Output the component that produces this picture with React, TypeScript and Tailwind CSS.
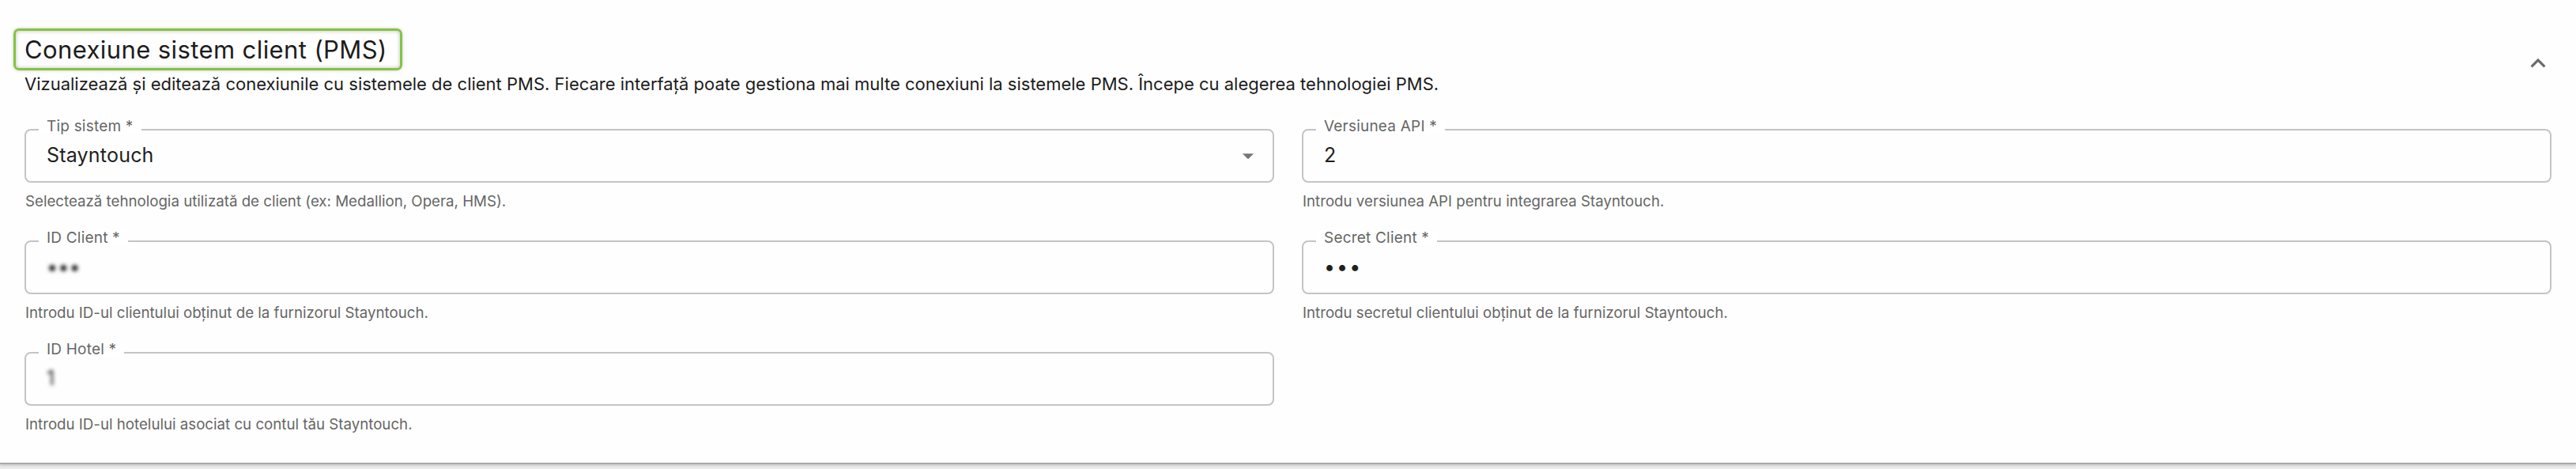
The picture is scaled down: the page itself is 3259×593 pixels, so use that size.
import React from 'react';

type FieldProps = {
  label: string;
  helper: string;
  children?: React.ReactNode;
  select?: boolean;
};

const Field: React.FC<FieldProps> = ({ label, helper, children, select }) => (
  <div className="flex flex-col">
    <div className="relative h-[68px] rounded-[8px] border-2 border-[#c4c4c4] flex items-center pl-[26px] pr-[14px]">
      {/* etichetă peste conturul câmpului */}
      <span className="absolute left-[16px] top-[-15px] bg-white px-[10px] text-[19px] leading-[19px] tracking-[0.2px] text-[#666666]">
        {label} *
      </span>
      <div className="flex-1 text-[25px] tracking-[0.2px] text-[#1f1f1f]">{children}</div>
      {select && (
        <svg viewBox="0 0 24 24" className="h-[34px] w-[34px] fill-[#757575]">
          <path d="M7 10l5 5 5-5z" />
        </svg>
      )}
    </div>
    <p className="mt-[9px] pl-[1px] text-[18.7px] leading-[30px] text-[#666666]">{helper}</p>
  </div>
);

const App: React.FC = () => {
  return (
    <div className="min-h-[593px] bg-[#ececec] font-['Inter','Noto_Sans',sans-serif]">
      <div className="h-[587px] bg-[#fefefe] border-b-2 border-[#a9a9a9] shadow-[0_2px_3px_rgba(0,0,0,0.15)] px-[31px] pt-[36px]">
        {/* Antet secțiune */}
        <div className="flex items-start justify-between">
          <div>
            <h2 className="inline-block -ml-[14px] rounded-[7px] border-[3px] border-[#84c441] pl-[11px] pr-[16px] text-[31px] leading-[47px] tracking-[0.4px] text-[#1c1c1c] shadow-[inset_0_0_5px_rgba(0,0,0,0.25),0_0_4px_rgba(0,0,0,0.2)]">
              Conexiune sistem client (PMS)
            </h2>
            <p className="mt-[2px] text-[22px] leading-[30px] text-[#1c1c1c]">
              Vizualizează și editează conexiunile cu sistemele de client PMS. Fiecare interfață poate gestiona mai multe conexiuni la sistemele PMS. Începe cu alegerea tehnologiei PMS.
            </p>
          </div>
          <svg viewBox="0 0 24 24" className="mt-[25px] -mr-[2px] h-[38px] w-[38px] fill-[#6b6b6b]">
            <path d="M12 8l-6 6 1.41 1.41L12 10.83l4.59 4.58L18 14z" />
          </svg>
        </div>

        {/* Câmpuri */}
        <div className="mt-[42px] grid grid-cols-2 gap-x-[35px] gap-y-[34px]">
          <Field label="Tip sistem" helper="Selectează tehnologia utilizată de client (ex: Medallion, Opera, HMS)." select>
            Stayntouch
          </Field>
          <Field label="Versiunea API" helper="Introdu versiunea API pentru integrarea Stayntouch.">
            2
          </Field>
          <Field label="ID Client" helper="Introdu ID-ul clientului obținut de la furnizorul Stayntouch.">
            <span className="inline-block blur-[2.5px] text-[#111111]">•••</span>
          </Field>
          <Field label="Secret Client" helper="Introdu secretul clientului obținut de la furnizorul Stayntouch.">
            <span className="tracking-[2px]">•••</span>
          </Field>
          <Field label="ID Hotel" helper="Introdu ID-ul hotelului asociat cu contul tău Stayntouch.">
            <span className="inline-block blur-[2.5px] text-[#222222]">1</span>
          </Field>
        </div>
      </div>
    </div>
  );
};

export default App;
